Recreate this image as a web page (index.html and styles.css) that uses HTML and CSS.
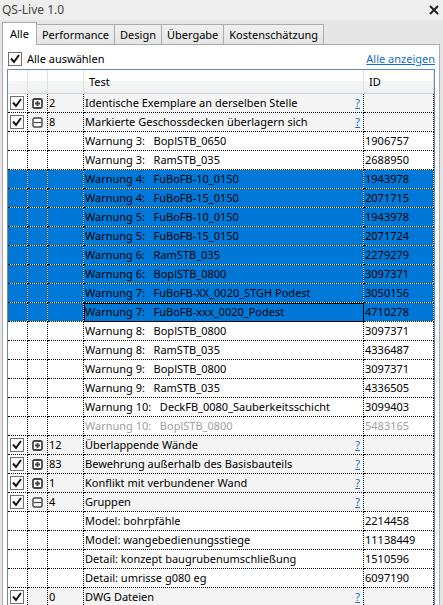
FILE: index.html
```html
<!DOCTYPE html>
<html lang="de">
<head>
<meta charset="utf-8">
<title>QS-Live 1.0</title>
<link rel="stylesheet" href="styles.css">
</head>
<body>
<header class="titlebar">
  <h1 class="title">QS-Live 1.0</h1>
  <button class="close" type="button" aria-label="Schließen"><svg width="10" height="10" viewBox="0 0 10 10"><path d="M1 1l8 8M9 1L1 9"/></svg></button>
</header>
<nav class="tabs">
  <button class="tab active" type="button">Alle</button>
  <button class="tab" type="button">Performance</button>
  <button class="tab" type="button">Design</button>
  <button class="tab" type="button">Übergabe</button>
  <button class="tab" type="button">Kostenschätzung</button>
</nav>
<main class="panel">
  <div class="toolbar">
    <label class="select-all"><input class="check" type="checkbox" checked>Alle auswählen</label>
    <a class="link" href="#">Alle anzeigen</a>
  </div>
  <table class="grid">
    <colgroup><col class="c-check"><col class="c-expand"><col class="c-count"><col><col class="c-id"></colgroup>
    <thead><tr><th></th><th></th><th></th><th>Test</th><th>ID</th></tr></thead>
    <tbody id="rows"></tbody>
  </table>
</main>
<script src="rows.js"></script>
</body>
</html>
```
FILE: styles.css
```css
* { box-sizing: border-box; }
html, body { height: 100%; }
body {
  margin: 0;
  display: flex;
  flex-direction: column;
  overflow: hidden;
  background: #e6e6e6;
  color: #000;
  font: 11px/18px "Noto Sans", "Open Sans", sans-serif;
}
button { font: inherit; color: inherit; }
.titlebar {
  display: flex;
  align-items: center;
  justify-content: space-between;
  flex: none;
  height: 20px;
  padding: 0 4px 0 2px;
  background: #eee;
}
.title { margin: 0; font-size: 12px; font-weight: 400; color: #444; }
.close { display: flex; padding: 0; border: 0; background: none; }
.close svg { fill: none; stroke: #222; stroke-width: 2; }
.tabs {
  display: flex;
  align-items: flex-end;
  flex: none;
  height: 25px;
  padding-left: 2px;
}
.tab {
  height: 21px;
  margin-left: -1px;
  padding: 0 5px;
  border: 1px solid #acacac;
  background: linear-gradient(#f0f0f0, #e5e5e5);
  line-height: 18px;
}
.tab.active {
  position: relative;
  height: 23px;
  margin-left: 0;
  padding: 0 7px;
  border-bottom: 0;
  background: #fff;
}
.panel {
  flex: none;
  margin: -1px 3px 0 2px;
  padding: 4px 4px 0;
  border: 1px solid #acacac;
  background: #fff;
}
.toolbar {
  display: flex;
  align-items: center;
  justify-content: space-between;
  height: 20px;
}
.select-all { display: flex; align-items: center; gap: 5px; }
.check {
  appearance: none;
  flex: none;
  width: 14px;
  height: 14px;
  margin: 0;
  border: 1px solid #707070;
  background: #fff;
}
.toolbar .check { margin-left: 1px; }
.check:checked {
  background: #fff url("data:image/svg+xml,%3Csvg xmlns='http://www.w3.org/2000/svg' viewBox='0 0 12 12'%3E%3Cpath d='M2 5.5l3 3.5 5-7' fill='none' stroke='%23111' stroke-width='2'/%3E%3C/svg%3E") center / 12px 12px no-repeat;
}
.link { color: #1170cf; text-decoration: underline; }
.grid {
  width: 100%;
  table-layout: fixed;
  border: 1px solid #688caf;
  border-bottom: 0;
  border-spacing: 0;
}
.c-check, .c-expand { width: 20px; }
.c-count { width: 36px; }
.c-id { width: 70px; }
th {
  height: 24px;
  padding: 0 5px;
  border-right: 1px solid #dedfe1;
  border-bottom: 1px solid #d5d5d5;
  background: linear-gradient(#fff 45%, #f5f6f8 50%, #f1f2f4);
  font-weight: 400;
  text-align: left;
}
td {
  height: 19px;
  padding: 0 1px;
  border-right: 1px dotted #000;
  border-bottom: 1px dotted #000;
  background-clip: padding-box;
  white-space: pre;
}
.group td { background-color: #f4f4f4; }
.group td:first-child { background-color: #fff; }
.group .check { display: block; margin-left: 1px; }
.group .link { padding-right: 2px; }
.cell { display: flex; justify-content: space-between; }
.expand { display: block; margin: 0 auto; padding: 0; border: 0; background: none; }
.expand svg { display: block; fill: #fff; stroke: #444; }
.selected td { background-color: #0078d7; }
.focused td:nth-child(4) { outline: 1px solid #000; outline-offset: -1px; }
.disabled td { color: #a0a0a0; }
```
FILE: rows.js
```js
const rows = [
  ["g", 2, "Identische Exemplare an derselben Stelle", "+"],
  ["g", 8, "Markierte Geschossdecken überlagern sich", "-"],
  ["", "Warnung 3:   BoplSTB_0650", 1906757],
  ["", "Warnung 3:   RamSTB_035", 2688950],
  ["selected", "Warnung 4:   FuBoFB-10_0150", 1943978],
  ["selected", "Warnung 4:   FuBoFB-15_0150", 2071715],
  ["selected", "Warnung 5:   FuBoFB-10_0150", 1943978],
  ["selected", "Warnung 5:   FuBoFB-15_0150", 2071724],
  ["selected", "Warnung 6:   RamSTB_035", 2279279],
  ["selected", "Warnung 6:   BoplSTB_0800", 3097371],
  ["selected", "Warnung 7:   FuBoFB-XX_0020_STGH Podest", 3050156],
  ["selected focused", "Warnung 7:   FuBoFB-xxx_0020_Podest", 4710278],
  ["", "Warnung 8:   BoplSTB_0800", 3097371],
  ["", "Warnung 8:   RamSTB_035", 4336487],
  ["", "Warnung 9:   BoplSTB_0800", 3097371],
  ["", "Warnung 9:   RamSTB_035", 4336505],
  ["", "Warnung 10:   DeckFB_0080_Sauberkeitsschicht", 3099403],
  ["disabled", "Warnung 10:   BoplSTB_0800", 5483165],
  ["g", 12, "Überlappende Wände", "+"],
  ["g", 83, "Bewehrung außerhalb des Basisbauteils", "+"],
  ["g", 1, "Konflikt mit verbundener Wand", "+"],
  ["g", 4, "Gruppen", "-"],
  ["", "Model: bohrpfähle", 2214458],
  ["", "Model: wangebedienungsstiege", 11138449],
  ["", "Detail: konzept baugrubenumschließung", 1510596],
  ["", "Detail: umrisse g080 eg", 6097190],
  ["g", 0, "DWG Dateien", ""]
];

function expander(sign) {
  if (!sign) return "";
  const plus = sign === "+";
  const box = `<rect x="1" y="1" width="9" height="9" rx="1.5" stroke-width="${plus ? 1.8 : 1.4}"/>`;
  const mark = `<path d="${plus ? "M3 5.5h5M5.5 3v5" : "M2 5.5h7"}" stroke-width="${plus ? 1.8 : 1.2}"/>`;
  return `<button class="expand" type="button" aria-label="${plus ? "Aufklappen" : "Zuklappen"}"><svg width="11" height="11" viewBox="0 0 11 11">${box}${mark}</svg></button>`;
}

document.getElementById("rows").innerHTML = rows.map(([kind, a, b, sign]) =>
  kind === "g"
    ? `<tr class="group"><td><input class="check" type="checkbox" checked aria-label="${b}"></td><td>${expander(sign)}</td><td>${a}</td><td><div class="cell"><span>${b}</span><a class="link" href="#">?</a></div></td><td></td></tr>`
    : `<tr class="${kind}"><td></td><td></td><td></td><td>${a}</td><td>${b}</td></tr>`
).join("");
```
